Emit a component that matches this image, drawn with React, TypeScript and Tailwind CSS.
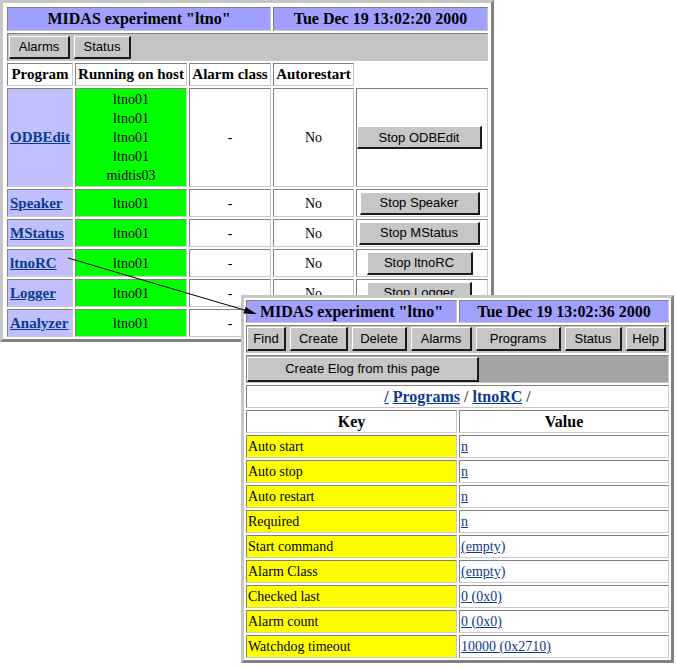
import React from 'react';

const serif = "font-['Liberation_Serif','Times_New_Roman',serif]";
const sans = "font-['Liberation_Sans',Arial,sans-serif]";
const cell =
  'border border-t-[#808080] border-l-[#808080] border-b-[#c8c8c8] border-r-[#c8c8c8]';
const btn = `${sans} text-[13px] text-black bg-[#c6c6c6] border-t border-l border-t-white border-l-white border-r-2 border-b-2 border-r-[#1a1a1a] border-b-[#1a1a1a] flex items-center justify-center leading-none`;
const link = 'text-[#0b3b8c] underline';

const frame =
  'absolute bg-white border-[3px] border-t-[#c6c6c6] border-l-[#c6c6c6] border-r-[#828282] border-b-[#828282]';

interface Prog {
  name: string;
  hosts: string[];
  btnW: string;
}

const programs: Prog[] = [
  { name: 'ODBEdit', hosts: ['ltno01', 'ltno01', 'ltno01', 'ltno01', 'midtis03'], btnW: 'w-[125px]' },
  { name: 'Speaker', hosts: ['ltno01'], btnW: 'w-[120px]' },
  { name: 'MStatus', hosts: ['ltno01'], btnW: 'w-[121px]' },
  { name: 'ltnoRC', hosts: ['ltno01'], btnW: 'w-[106px]' },
  { name: 'Logger', hosts: ['ltno01'], btnW: 'w-[105px]' },
  { name: 'Analyzer', hosts: ['ltno01'], btnW: 'w-[112px]' },
];

const keys: [string, string][] = [
  ['Auto start', 'n'],
  ['Auto stop', 'n'],
  ['Auto restart', 'n'],
  ['Required', 'n'],
  ['Start command', '(empty)'],
  ['Alarm Class', '(empty)'],
  ['Checked last', '0 (0x0)'],
  ['Alarm count', '0 (0x0)'],
  ['Watchdog timeout', '10000 (0x2710)'],
];

function StatusWindow() {
  return (
    <div className={`${frame} left-0 top-0 w-[494px] h-[342px] pl-[4px] pt-[4px] overflow-hidden`}>
      <div className={`grid grid-cols-[66px_112px_82px_81px_132px] gap-[2px] ${serif} text-black`}>
        {/* title */}
        <div className={`${cell} col-span-3 h-[24px] bg-[#a0a0ff] flex items-center justify-center text-[16px] font-bold`}>
          MIDAS experiment "ltno"
        </div>
        <div className={`${cell} col-span-2 h-[24px] bg-[#a0a0ff] flex items-center justify-center text-[16px] font-bold`}>
          Tue Dec 19 13:02:20 2000
        </div>

        {/* buttons */}
        <div className={`${cell} col-span-5 h-[28px] bg-[#c4c4c4] flex items-center gap-[4px] pl-[1px]`}>
          <button className={`${btn} w-[61px] h-[23px]`}>Alarms</button>
          <button className={`${btn} w-[57px] h-[23px]`}>Status</button>
        </div>

        {/* column headers */}
        {['Program', 'Running on host', 'Alarm class', 'Autorestart'].map((h) => (
          <div key={h} className={`${cell} h-[23px] flex items-center justify-center text-[15px] font-bold whitespace-nowrap`}>
            {h}
          </div>
        ))}
        <div />

        {programs.map((p) => (
          <React.Fragment key={p.name}>
            <div className={`${cell} bg-[#c0c0ff] flex items-center pl-[2px] ${p.hosts.length > 1 ? 'h-[99px]' : 'h-[28px]'}`}>
              <a className={`${link} text-[15px] font-bold`}>{p.name}</a>
            </div>
            <div className={`${cell} bg-[#00ff00] flex flex-col items-center justify-center text-[14px] leading-[19px]`}>
              {p.hosts.map((h, i) => (
                <span key={i}>{h}</span>
              ))}
            </div>
            <div className={`${cell} flex items-center justify-center text-[14px]`}>-</div>
            <div className={`${cell} flex items-center justify-center text-[14px]`}>No</div>
            <div className={`${cell} flex items-center justify-center pr-[5px]`}>
              <button className={`${btn} ${p.btnW} h-[23px]`}>Stop {p.name}</button>
            </div>
          </React.Fragment>
        ))}
      </div>
    </div>
  );
}

function OdbWindow() {
  const tabs: [string, string][] = [
    ['Find', 'w-[39px]'],
    ['Create', 'w-[58px]'],
    ['Delete', 'w-[55px]'],
    ['Alarms', 'w-[61px]'],
    ['Programs', 'w-[85px]'],
    ['Status', 'w-[57px]'],
    ['Help', 'w-[40px]'],
  ];
  return (
    <div className={`${frame} left-[241px] top-[295px] w-[433px] h-[368px] pl-[2px] pt-[2px] overflow-hidden`}>
      <div className={`grid grid-cols-[211px_210px] gap-[2px] ${serif} text-black`}>
        <div className={`${cell} h-[23px] bg-[#a0a0ff] flex items-center justify-center text-[16px] font-bold`}>
          MIDAS experiment "ltno"
        </div>
        <div className={`${cell} h-[23px] bg-[#a0a0ff] flex items-center justify-center text-[16px] font-bold`}>
          Tue Dec 19 13:02:36 2000
        </div>

        <div className={`${cell} col-span-2 h-[28px] bg-[#c4c4c4] flex items-center gap-[4px]`}>
          {tabs.map(([t, w]) => (
            <button key={t} className={`${btn} ${w} h-[24px]`}>
              {t}
            </button>
          ))}
        </div>

        <div className={`${cell} col-span-2 h-[28px] bg-[#a4a4a4] flex items-center`}>
          <button className={`${btn} w-[232px] h-[25px]`}>Create Elog from this page</button>
        </div>

        <div className={`${cell} col-span-2 h-[23px] flex items-center justify-center text-[16px] font-bold`}>
          <a className={link}>/</a>
          <span>&nbsp;</span>
          <a className={link}>Programs</a>
          <span className="font-normal">&nbsp;/&nbsp;</span>
          <a className={link}>ltnoRC</a>
          <span className="font-normal">&nbsp;/</span>
        </div>

        <div className={`${cell} h-[23px] flex items-center justify-center text-[16px] font-bold`}>Key</div>
        <div className={`${cell} h-[23px] flex items-center justify-center text-[16px] font-bold`}>Value</div>

        {keys.map(([k, v]) => (
          <React.Fragment key={k}>
            <div className={`${cell} h-[23px] bg-[#ffff00] flex items-center pl-[1px] text-[14px]`}>{k}</div>
            <div className={`${cell} h-[23px] flex items-center pl-[1px] text-[14px]`}>
              <a className={link}>{v}</a>
            </div>
          </React.Fragment>
        ))}
      </div>
    </div>
  );
}

export default function App() {
  return (
    <div className="relative w-[677px] h-[668px] bg-white overflow-hidden">
      <StatusWindow />
      <OdbWindow />
      <svg className="absolute left-0 top-0 pointer-events-none" width="677" height="668" viewBox="0 0 677 668">
        <line x1="68" y1="258" x2="246" y2="310.5" stroke="black" strokeWidth="1" />
        <polygon points="257,314 243.4,313.4 245.6,307" fill="black" />
      </svg>
    </div>
  );
}
